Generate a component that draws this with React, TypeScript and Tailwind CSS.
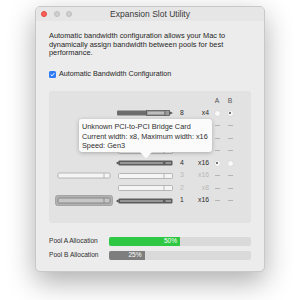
type Pool = "A" | "B" | null;

type SlotRow = {
  slot: number;
  left?: "empty" | "card";
  right: "empty" | "occupied" | "partial";
  width: string;
  active: boolean;
  pool: Pool;
  hidden?: boolean;
};

// rows 7 and 6 sit under the tooltip, so only their pool dashes show
const rows: SlotRow[] = [
  { slot: 8, right: "partial", width: "x4", active: true, pool: "B" },
  { slot: 7, right: "empty", width: "x8", active: false, pool: null, hidden: true },
  { slot: 6, right: "empty", width: "x8", active: false, pool: null, hidden: true },
  { slot: 5, right: "empty", width: "x16", active: false, pool: null },
  { slot: 4, right: "occupied", width: "x16", active: true, pool: "A" },
  { slot: 3, left: "empty", right: "empty", width: "x16", active: false, pool: null },
  { slot: 2, right: "empty", width: "x8", active: false, pool: null },
  { slot: 1, left: "card", right: "occupied", width: "x16", active: true, pool: null },
];

const font = { fontFamily: '"Liberation Sans", Arial, sans-serif' };

function RightSlot({ kind }: { kind: SlotRow["right"] }) {
  if (kind === "empty") {
    return (
      <svg width="58" height="8" viewBox="0 0 58 8">
        <rect x="2.5" y="1.5" width="54" height="5" rx="1" fill="#f5f5f5" stroke="#a8a8a8" strokeWidth="0.8" />
        <line x1="48" y1="1.5" x2="48" y2="6.5" stroke="#a8a8a8" strokeWidth="0.8" />
      </svg>
    );
  }
  if (kind === "partial") {
    return (
      <svg width="58" height="8" viewBox="0 0 58 8">
        <rect x="1" y="1.5" width="30" height="5" rx="1" fill="#6c6c6c" />
        <rect x="30.5" y="1.5" width="23" height="5" fill="#9a9a9a" stroke="#5a5a5a" strokeWidth="0.8" />
        <rect x="32" y="3.4" width="16" height="1.2" fill="#d4d4d4" />
        <line x1="49" y1="1.5" x2="49" y2="6.5" stroke="#5a5a5a" strokeWidth="0.8" />
        <path d="M53.5 2.2 L57 4 L53.5 5.8 Z" fill="#5a5a5a" />
      </svg>
    );
  }
  return (
    <svg width="58" height="8" viewBox="0 0 58 8">
      <path d="M0 4 L2.6 2.2 L2.6 5.8 Z" fill="#4a4a4a" />
      <rect x="2.5" y="1.5" width="54" height="5" rx="1" fill="#5c5c5c" />
      <rect x="4" y="3.4" width="43" height="1.2" fill="#bdbdbd" />
      <rect x="49.5" y="3.4" width="5.5" height="1.2" fill="#bdbdbd" />
    </svg>
  );
}

function LeftSlot({ kind }: { kind?: SlotRow["left"] }) {
  if (!kind) return null;
  const card = kind === "card";
  return (
    <svg width="58" height="11" viewBox="0 0 58 11">
      {card && <rect x="0.5" y="0.5" width="57" height="10" rx="2" fill="#b1b1b1" stroke="#9c9c9c" strokeWidth="0.8" />}
      <rect
        x="3"
        y="3"
        width="52"
        height="5"
        rx="1"
        fill={card ? "#c6c6c6" : "#f5f5f5"}
        stroke={card ? "#7c7c7c" : "#a8a8a8"}
        strokeWidth="0.8"
      />
      <line x1="49" y1="3" x2="49" y2="8" stroke={card ? "#7c7c7c" : "#a8a8a8"} strokeWidth="0.8" />
    </svg>
  );
}

function Radio({ on }: { on: boolean }) {
  return (
    <div className="flex h-[7px] w-[7px] items-center justify-center rounded-full border border-[#dadada] bg-[#f8f8f8]">
      {on && <div className="h-[2px] w-[2px] rounded-full bg-[#4a4a4a]" />}
    </div>
  );
}

function Dash() {
  return <div className="h-px w-[5px] bg-[#b4b4b4]" />;
}

function PoolBar({ label, pct, fill }: { label: string; pct: number; fill: string }) {
  return (
    <div className="flex h-[10px] items-center">
      <div className="w-[60px] text-[6.6px] text-[#2e2e2e]">{label}</div>
      <div className="flex h-[9px] flex-1 overflow-hidden rounded-[2px] bg-[#dadada]">
        <div className={`flex h-full items-center justify-end pr-[3px] ${fill}`} style={{ width: `${pct}%` }}>
          <span className="text-[6.5px] leading-none text-white">{pct}%</span>
        </div>
      </div>
    </div>
  );
}

export default function App() {
  return (
    <div className="h-[300px] w-[300px] overflow-hidden bg-white pl-[35px] pt-[6px]" style={font}>
      <div className="h-[266px] w-[230px] overflow-hidden rounded-[5px] border border-[#c8c8c8] bg-[#ececec] shadow-[0_10px_28px_rgba(0,0,0,0.32)]">
        <div className="grid h-[14px] grid-cols-[1fr_auto_1fr] items-center bg-[#e6e6e6]">
          <div className="flex items-center gap-[6.5px] pl-[5px]">
            <div className="h-[6px] w-[6px] rounded-full border-[0.5px] border-[#df4740] bg-[#fd5f57]" />
            <div className="h-[6px] w-[6px] rounded-full border-[0.5px] border-[#bdbdbd] bg-[#d0d0d0]" />
            <div className="h-[6px] w-[6px] rounded-full border-[0.5px] border-[#bdbdbd] bg-[#d0d0d0]" />
          </div>
          <div className="text-[8.5px] text-[#3a3a3a]">Expansion Slot Utility</div>
          <div />
        </div>

        <div className="px-[13px] pb-[13px]">
          <p className="mt-[10.75px] text-[7.4px] leading-[8.75px] text-[#262626]">
            Automatic bandwidth configuration allows your Mac to
            <br />
            dynamically assign bandwidth between pools for best
            <br />
            performance.
          </p>

          <label className="mt-[12px] flex h-[9px] items-center gap-[3px]">
            <span className="flex h-[7px] w-[7px] items-center justify-center rounded-[1.5px] bg-[#2f7cf6]">
              <svg width="7" height="7" viewBox="0 0 7 7">
                <path d="M1.7 3.6 L3 4.9 L5.4 2.1" fill="none" stroke="#fff" strokeWidth="1" />
              </svg>
            </span>
            <span className="text-[7.2px] text-[#262626]">Automatic Bandwidth Configuration</span>
          </label>

          <div className="relative mt-[12px] h-[132px] rounded-[3px] bg-[#e2e2e2] pt-[5px]">
            <div className="flex h-[10.75px] items-center pl-[160px] text-[6.8px] text-[#555]">
              <div className="w-[16px] text-center">A</div>
              <div className="w-[10px] text-center">B</div>
            </div>

            {rows.map((row) => (
              <div key={row.slot} className="flex h-[12.5px] items-center">
                <div className="ml-[6px] flex w-[58px] items-center">
                  <LeftSlot kind={row.left} />
                </div>
                <div className="ml-[3px] flex w-[58px] items-center">
                  {!row.hidden && <RightSlot kind={row.right} />}
                </div>
                <div
                  className={`w-[16px] text-center text-[6.8px] ${row.active ? "text-[#2a2a2a]" : "text-[#b8b8b8]"}`}
                >
                  {row.hidden || row.slot === 5 ? "" : row.slot}
                </div>
                <div
                  className={`w-[19px] text-right text-[6.8px] ${row.active ? "text-[#2a2a2a]" : "text-[#b8b8b8]"}`}
                >
                  {row.hidden ? "" : row.width}
                </div>
                <div className="flex w-[16px] justify-center">
                  {row.pool ? <Radio on={row.pool === "A"} /> : <Dash />}
                </div>
                <div className="flex w-[10px] justify-center">
                  {row.pool ? <Radio on={row.pool === "B"} /> : <Dash />}
                </div>
              </div>
            ))}

            <div className="absolute left-[30px] top-[28px] h-[33px] w-[133px] rounded-[3px] bg-[#fbfbfb] pl-[3px] pt-[3px] text-[7.3px] leading-[9.5px] text-[#2e2e2e] shadow-[0_1px_4px_rgba(0,0,0,0.25)]">
              <div>Unknown PCI-to-PCI Bridge Card</div>
              <div>Current width: x8, Maximum width: x16</div>
              <div>Speed: Gen3</div>
              <svg
                className="absolute left-1/2 top-full -translate-x-1/2"
                width="12"
                height="7"
                viewBox="0 0 12 7"
              >
                <path d="M0 0 L6 6.5 L12 0 Z" fill="#fbfbfb" />
              </svg>
            </div>
          </div>

          <div className="mt-[13px] flex flex-col gap-[4px]">
            <PoolBar label="Pool A Allocation" pct={50} fill="bg-[#2fc844]" />
            <PoolBar label="Pool B Allocation" pct={25} fill="bg-[#7e7e7e]" />
          </div>
        </div>
      </div>
    </div>
  );
}
